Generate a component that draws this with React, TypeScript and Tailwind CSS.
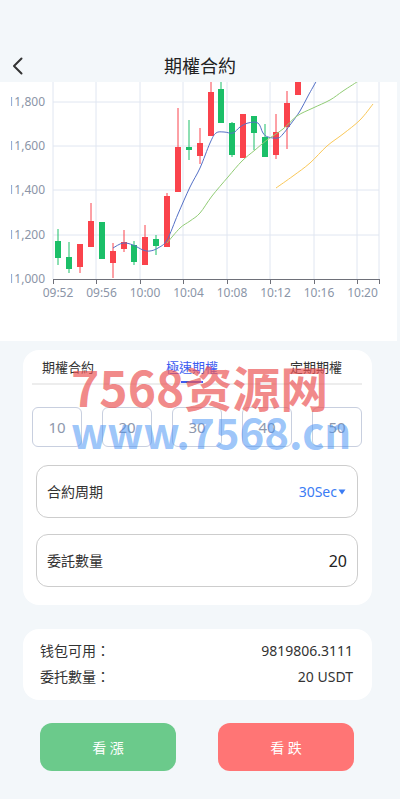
import { useState } from "react";

type Candle = [number, number, number, number, number, "r" | "g"];

// x, bodyTop, bodyBottom, wickTop, wickBottom, colour
const candles: Candle[] = [
  [58, 241, 258, 229, 265, "g"],
  [69, 257, 269, 242, 273, "g"],
  [80, 244, 267, 244, 273, "r"],
  [91, 221, 247, 203, 247, "r"],
  [102, 222, 259, 222, 259, "g"],
  [113, 251, 263, 243, 278, "r"],
  [124, 242, 249, 230, 252, "r"],
  [134, 245, 262, 241, 265, "g"],
  [145, 237, 265, 225, 265, "r"],
  [156, 239, 246, 235, 255, "g"],
  [167, 196, 247, 193, 247, "r"],
  [178, 147, 192, 108, 192, "r"],
  [189, 147, 150, 120, 160, "g"],
  [200, 143, 156, 128, 164, "r"],
  [211, 92, 136, 70, 136, "r"],
  [221, 89, 123, 70, 123, "g"],
  [232, 123, 155, 122, 157, "g"],
  [243, 114, 158, 114, 158, "r"],
  [254, 116, 133, 116, 150, "g"],
  [265, 137, 157, 124, 157, "g"],
  [276, 132, 155, 114, 159, "r"],
  [287, 103, 127, 91, 149, "r"],
  [298, 70, 95, 70, 95, "r"],
];

const ma5: [number, number][] = [
  [113, 248], [123, 243], [133, 245], [143, 250], [150, 251], [158, 248],
  [167, 240], [178, 214], [190, 187], [200, 168], [210, 143], [216, 133],
  [224, 132], [233, 133], [240, 127], [248, 123], [258, 123], [263, 133],
  [268, 137], [278, 138], [283, 134], [290, 125], [300, 111], [308, 96], [317, 80],
];

const ma10: [number, number][] = [
  [167, 243], [180, 228], [190, 221], [200, 213], [212, 196], [228, 177],
  [242, 161], [255, 150], [267, 140], [283, 129], [297, 116], [313, 108],
  [330, 100], [343, 91], [360, 80],
];

const ma30: [number, number][] = [
  [276, 188], [293, 176], [310, 163], [327, 146], [343, 134], [360, 120], [373, 104],
];

const xTicks = [53, 96, 140, 183, 227, 270, 314, 357, 379];
const xLabels = ["09:52", "09:56", "10:00", "10:04", "10:08", "10:12", "10:16", "10:20"];
const yGrid: [number, string][] = [
  [102, "11,800"],
  [146, "11,600"],
  [190, "11,400"],
  [235, "11,200"],
  [279, "11,000"],
];

function smooth(pts: [number, number][]) {
  let d = `M${pts[0][0]},${pts[0][1]}`;
  for (let i = 0; i < pts.length - 1; i++) {
    const p0 = pts[i - 1] || pts[i];
    const p1 = pts[i];
    const p2 = pts[i + 1];
    const p3 = pts[i + 2] || p2;
    const c1x = p1[0] + (p2[0] - p0[0]) / 6;
    const c1y = p1[1] + (p2[1] - p0[1]) / 6;
    const c2x = p2[0] - (p3[0] - p1[0]) / 6;
    const c2y = p2[1] - (p3[1] - p1[1]) / 6;
    d += ` C${c1x},${c1y} ${c2x},${c2y} ${p2[0]},${p2[1]}`;
  }
  return d;
}

function KlineChart() {
  return (
    <svg width={397} height={259} viewBox="0 82 397 259" className="block">
      <defs>
        <clipPath id="ylab">
          <rect x={11} y={82} width={60} height={259} />
        </clipPath>
      </defs>
      {/* grid */}
      {yGrid.slice(0, 4).map(([y]) => (
        <line key={y} x1={53} x2={379} y1={y} y2={y} stroke="#e0e6f1" strokeWidth={1} />
      ))}
      {xTicks.map((x) => (
        <line key={x} x1={x} x2={x} y1={60} y2={279} stroke="#e0e6f1" strokeWidth={1} />
      ))}
      {/* x axis */}
      <line x1={53} x2={379} y1={279.5} y2={279.5} stroke="#6e7079" strokeWidth={1} />
      {xTicks.map((x) => (
        <line key={x} x1={x + 0.5} x2={x + 0.5} y1={279} y2={284} stroke="#6e7079" strokeWidth={1} />
      ))}
      {xLabels.map((t, i) => (
        <text
          key={t}
          x={58 + i * 43.5}
          y={297}
          textAnchor="middle"
          fontSize={12}
          fill="#8b95a7"
          fontFamily="'Noto Sans', sans-serif"
        >
          {t}
        </text>
      ))}
      <g clipPath="url(#ylab)">
        {yGrid.map(([y, t]) => (
          <text
            key={t}
            x={45}
            y={y + 4}
            textAnchor="end"
            fontSize={12}
            fill="#8b95a7"
            fontFamily="'Noto Sans', sans-serif"
          >
            {t}
          </text>
        ))}
      </g>
      {/* candles */}
      {candles.map(([x, bt, bb, wt, wb, c]) => {
        const col = c === "r" ? "#fa434c" : "#1bbf68";
        return (
          <g key={x}>
            <line x1={x} x2={x} y1={wt} y2={wb} stroke={col} strokeWidth={1} />
            <rect x={x - 3} y={bt} width={6} height={Math.max(bb - bt, 2)} fill={col} />
          </g>
        );
      })}
      {/* moving averages */}
      <path d={smooth(ma5)} fill="none" stroke="#5470c6" strokeWidth={1} />
      <path d={smooth(ma10)} fill="none" stroke="#91cc75" strokeWidth={1} />
      <path d={smooth(ma30)} fill="none" stroke="#fac858" strokeWidth={1} />
    </svg>
  );
}

export default function App() {
  const [tab, setTab] = useState(1);
  const [amount, setAmount] = useState<number | null>(null);
  const tabs = ["期權合約", "極速期權", "定期期權"];

  return (
    <div className="relative h-[799px] w-[400px] overflow-hidden bg-[#f3f7fa] font-['Noto_Sans','Noto_Sans_CJK_TC',sans-serif] text-[#333]">
      {/* Header */}
      <div className="grid h-[82px] grid-cols-[1fr_auto_1fr] pt-[54px]">
        <div className="flex h-6 items-center pl-[12px]">
          <svg width={12} height={18} viewBox="0 0 12 18">
            <polyline
              points="9.5,1.5 2,9 9.5,16.5"
              fill="none"
              stroke="#333"
              strokeWidth={2}
              strokeLinecap="round"
              strokeLinejoin="round"
            />
          </svg>
        </div>
        <p className="text-[18px] leading-6 text-[#222]">期權合約</p>
        <div />
      </div>

      {/* Chart */}
      <div className="h-[259px] w-[397px] bg-white">
        <KlineChart />
      </div>

      {/* Trade card */}
      <div className="ml-[23px] mt-[9px] w-[349px] rounded-2xl bg-white pb-[18px] pl-[9px] pr-[10px] pt-[7px]">
        <div className="flex justify-between border-b-2 border-[#ededed] pl-[10px] pr-[20px]">
          {tabs.map((t, i) => (
            <button key={t} onClick={() => setTab(i)} className="flex flex-col items-center">
              <span className={`text-[13px] leading-5 ${tab === i ? "text-[#3d5cf0]" : "text-[#333]"}`}>{t}</span>
              <span className={`mt-[4px] h-[2px] w-[22px] ${tab === i ? "bg-[#3d5cf0]" : "bg-transparent"}`} />
            </button>
          ))}
        </div>

        <div className="mt-[22px] flex gap-5">
          {[10, 20, 30, 40, 50].map((v) => (
            <button
              key={v}
              onClick={() => setAmount(v)}
              className={`flex h-10 w-[50px] items-center justify-center rounded-md border text-[15px] ${
                amount === v ? "border-[#3d5cf0] text-[#3d5cf0]" : "border-[#c8cfdf] text-[#8e98ad]"
              }`}
            >
              {v}
            </button>
          ))}
        </div>

        <div className="mx-[4px] mt-[18px] flex h-[53px] items-center justify-between rounded-xl border border-[#cdcdcd] pl-[10px] pr-[11px]">
          <span className="text-[14px] text-[#333]">合約周期</span>
          <span className="flex items-center text-[14px] text-[#3b7cf4]">
            30Sec
            <svg width={8} height={6} viewBox="0 0 8 6" className="ml-[1px]">
              <path d="M0.5 0.5 L7.5 0.5 L4 5.5 Z" fill="#3b7cf4" />
            </svg>
          </span>
        </div>

        <div className="mx-[4px] mt-4 flex h-[53px] items-center justify-between rounded-xl border border-[#cdcdcd] pl-[10px] pr-[10px]">
          <span className="text-[14px] text-[#333]">委託數量</span>
          <span className="text-[16px] text-[#222]">20</span>
        </div>
      </div>

      {/* Info card */}
      <div className="ml-[23px] mt-6 flex w-[349px] flex-col gap-[6px] rounded-2xl bg-white pb-[13px] pl-[17px] pr-[19px] pt-[12px] text-[14px] leading-5 text-[#333]">
        <div className="flex justify-between">
          <span>钱包可用：</span>
          <span>9819806.3111</span>
        </div>
        <div className="flex justify-between">
          <span>委托數量：</span>
          <span>20 USDT</span>
        </div>
      </div>

      {/* Buttons */}
      <div className="mt-[23px] flex gap-[42px] pl-[40px]">
        <button className="h-12 w-[136px] rounded-xl bg-[#6bca8b] text-[14px] text-white">看 漲</button>
        <button className="h-12 w-[136px] rounded-xl bg-[#ff7575] text-[14px] text-white">看 跌</button>
      </div>

      {/* Watermark */}
      <div className="pointer-events-none absolute left-[71px] top-[362px] flex flex-col font-['Noto_Sans_CJK_SC',sans-serif] font-bold">
        <span className="text-[48px] leading-[48px] text-[#ec5555]/70">7568资源网</span>
        <span className="text-[42px] leading-[42px] text-[#4a94f5]/55">www.7568.cn</span>
      </div>
    </div>
  );
}
